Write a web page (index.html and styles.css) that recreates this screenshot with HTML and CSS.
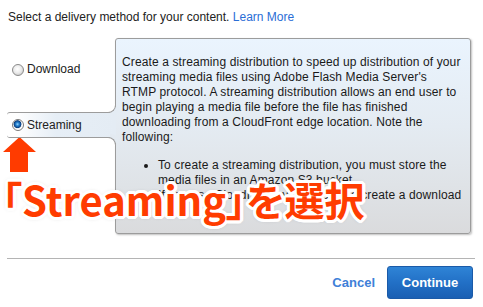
FILE: index.html
```html
<!DOCTYPE html>
<html lang="en">
<head>
<meta charset="utf-8">
<title>Delivery method</title>
<link rel="stylesheet" href="styles.css">
</head>
<body>
<div class="wizard">
  <p class="intro">Select a delivery method for your content. <a class="link" href="#">Learn More</a></p>

  <div class="method">
    <div class="tabs">
      <label class="tab tab-download"><span class="radio"></span>Download</label>
      <label class="tab tab-streaming"><span class="radio radio-on"></span>Streaming</label>
    </div>
    <div class="panel">
      <p class="panel-text">Create a streaming distribution to speed up distribution of your<br>streaming media files using Adobe Flash Media Server's<br>RTMP protocol. A streaming distribution allows an end user to<br>begin playing a media file before the file has finished<br>downloading from a CloudFront edge location. Note the<br>following:</p>
      <ul class="notes">
        <li>To create a streaming distribution, you must store the<br>media files in an Amazon S3 bucket.</li>
        <li>If you use CloudFront, you must also create a download</li>
      </ul>
    </div>
  </div>

  <hr class="divider">

  <div class="footer">
    <a class="cancel" href="#">Cancel</a>
    <button class="continue" type="button">Continue</button>
  </div>

  <svg class="callout-arrow" width="34" height="35" viewBox="0 0 34 35" aria-hidden="true">
    <polygon points="16.5,0 33,15 25,15 25,35 7,35 7,15 0,15" fill="#ff3b00"/>
  </svg>
  <div class="callout-text">「Streaming」を選択</div>
</div>
</body>
</html>
```
FILE: styles.css
```css
html, body {
  margin: 0;
  padding: 0;
  background: #fff;
}

body {
  font-family: "Liberation Sans", Arial, sans-serif;
  font-size: 12px;
  color: #222;
}

.wizard {
  position: relative;
  width: 468px;
  padding: 10px 0 0 7px;
}

.intro {
  margin: 0 0 0 1px;
  line-height: 15px;
}

.link {
  color: #2a6ed6;
  text-decoration: none;
}

.method {
  display: flex;
  margin-top: 13px;
  height: 196px;
}

.tabs {
  width: 108px;
  flex: none;
  display: flex;
  flex-direction: column;
}

.tab {
  display: flex;
  align-items: center;
  line-height: 15px;
  color: #222;
}

.tab-download {
  height: 74px;
  box-sizing: border-box;
  padding: 24px 0 0 5px;
  align-items: flex-start;
}

.tab-streaming {
  position: relative;
  z-index: 1;
  margin-right: -1px;
  height: 26px;
  box-sizing: border-box;
  padding-left: 5px;
  border-top: 1px solid #9c9c9c;
  border-bottom: 1px solid #9c9c9c;
  border-radius: 3px 0 0 3px;
  background: linear-gradient(to right, #ffffff 8%, #e6eef6 45%, #e4ecf4 100%);
}

.tab-streaming::before,
.tab-streaming::after {
  content: "";
  position: absolute;
  right: 0;
  width: 8px;
  height: 8px;
  background: #fff;
  border-right: 1px solid #9c9c9c;
}

.tab-streaming::before {
  bottom: 100%;
  border-bottom: 1px solid #9c9c9c;
  border-bottom-right-radius: 8px;
  box-shadow: 3px 3px 0 0 #e4ecf4;
}

.tab-streaming::after {
  top: 100%;
  border-top: 1px solid #9c9c9c;
  border-top-right-radius: 8px;
  box-shadow: 3px -3px 0 0 #e3eaf1;
}

.radio {
  width: 12px;
  height: 12px;
  box-sizing: border-box;
  margin-right: 3px;
  border-radius: 50%;
  border: 1px solid #8a8a8a;
  background: radial-gradient(circle at 45% 40%, #ffffff 0, #ececec 45%, #bdbdbd 100%);
  flex: none;
}

.tab-download .radio {
  margin-top: 2px;
}

.radio-on {
  border-color: #7a7a7a;
  background: radial-gradient(circle at 45% 42%, #9ad6ff 0, #2a86d2 1.6px, #0d4b92 3.2px, #0a3a78 3.6px, #e4e9ee 4.2px, #ffffff 5px);
}

.panel {
  flex: 1;
  margin-right: 4px;
  box-sizing: border-box;
  padding: 16px 6px 0 6px;
  border: 1px solid #9c9c9c;
  border-radius: 3px;
  background: linear-gradient(to bottom, #eaf4fe 0%, #e4ebf2 45%, #dfe3e7 75%, #dadbdd 100%);
  box-shadow: 1px 1px 2px rgba(0, 0, 0, 0.25);
  line-height: 15px;
  letter-spacing: 0.12px;
  color: #1a1a1a;
}

.panel-text {
  margin: 0;
}

.notes {
  margin: 13px 0 0;
  padding-left: 36px;
}

.divider {
  margin: 24px 0 0;
  border: 0;
  border-top: 1px solid #b4b4b4;
  height: 0;
}

.footer {
  display: flex;
  justify-content: flex-end;
  align-items: center;
  gap: 12px;
  margin-top: 7px;
  padding-right: 2px;
}

.cancel {
  font-size: 13px;
  font-weight: bold;
  color: #3e80d8;
  text-decoration: none;
}

.continue {
  width: 86px;
  height: 33px;
  box-sizing: border-box;
  border: 1px solid #1a5aa8;
  border-radius: 3px;
  background: linear-gradient(to bottom, #2f84d6 0%, #2270c6 50%, #1a5fb3 100%);
  color: #fff;
  font-family: "Liberation Sans", Arial, sans-serif;
  font-size: 13px;
  font-weight: bold;
  padding: 0;
}

.callout-arrow {
  position: absolute;
  left: 3px;
  top: 137px;
}

.callout-text {
  position: absolute;
  left: 2px;
  top: 179px;
  font-family: "Noto Sans CJK JP", "Noto Sans", sans-serif;
  font-feature-settings: "palt";
  font-size: 40px;
  font-weight: bold;
  line-height: 40px;
  white-space: nowrap;
  color: #ff3c00;
  text-shadow:
    3px 0 0 #fff, -3px 0 0 #fff, 0 3px 0 #fff, 0 -3px 0 #fff,
    2px 2px 0 #fff, -2px 2px 0 #fff, 2px -2px 0 #fff, -2px -2px 0 #fff,
    3px 1px 0 #fff, -3px 1px 0 #fff, 3px -1px 0 #fff, -3px -1px 0 #fff,
    1px 3px 0 #fff, -1px 3px 0 #fff, 1px -3px 0 #fff, -1px -3px 0 #fff,
    0 0 5px rgba(0, 0, 0, 0.35);
}
```
